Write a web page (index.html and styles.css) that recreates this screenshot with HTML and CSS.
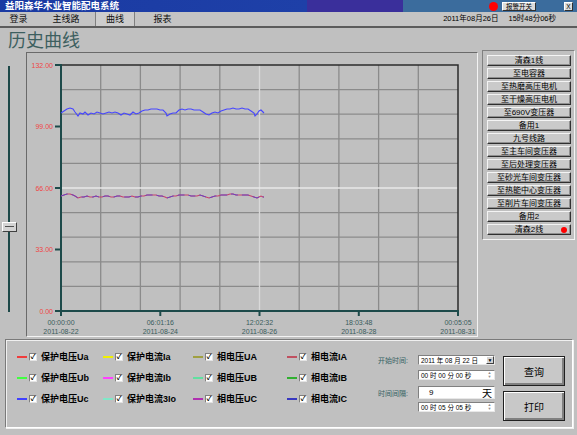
FILE: index.html
```html
<!DOCTYPE html>
<html lang="zh-CN">
<head>
    <meta charset="UTF-8">
    <title>历史曲线</title>
    <link rel="stylesheet" href="styles.css">
</head>
<body>
    <div class="titlebar">
        <span class="app-name">益阳森华木业智能配电系统</span>
        <span class="alarm-dot"></span>
        <span class="alarm-btn">报警开关</span>
        <span class="close-btn">X</span>
    </div>
    <div class="menubar">
        <span class="tab tab-login">登录</span>
        <span class="tab tab-main">主线路</span>
        <span class="tab tab-curve">曲线</span>
        <span class="tab tab-report">报表</span>
        <span class="clock">2011年08月26日<span class="clock-time">15时48分06秒</span></span>
    </div>

    <div class="workspace">
        <div class="left-col">
            <div class="page-title">历史曲线</div>
            <div class="chart-row">
                <div class="slider">
                    <div class="slider-track"></div>
                    <div class="slider-thumb"></div>
                </div>
                <div class="chart-box">
                    <svg class="chart" width="450" height="283" viewBox="27 53 450 283">
                        <!-- grid -->
                        <g stroke="#8b8b8b" stroke-width="1.3">
                            <line x1="100.7" y1="65" x2="100.7" y2="311"/>
                            <line x1="140.4" y1="65" x2="140.4" y2="311"/>
                            <line x1="180.1" y1="65" x2="180.1" y2="311"/>
                            <line x1="219.8" y1="65" x2="219.8" y2="311"/>
                            <line x1="299.2" y1="65" x2="299.2" y2="311"/>
                            <line x1="338.9" y1="65" x2="338.9" y2="311"/>
                            <line x1="378.6" y1="65" x2="378.6" y2="311"/>
                            <line x1="418.3" y1="65" x2="418.3" y2="311"/>
                            <line x1="61" y1="89.6" x2="458" y2="89.6"/>
                            <line x1="61" y1="114.2" x2="458" y2="114.2"/>
                            <line x1="61" y1="138.8" x2="458" y2="138.8"/>
                            <line x1="61" y1="163.4" x2="458" y2="163.4"/>
                            <line x1="61" y1="212.6" x2="458" y2="212.6"/>
                            <line x1="61" y1="237.2" x2="458" y2="237.2"/>
                            <line x1="61" y1="261.8" x2="458" y2="261.8"/>
                            <line x1="61" y1="286.4" x2="458" y2="286.4"/>
                        </g>
                        <line x1="259.5" y1="65" x2="259.5" y2="311" stroke="#d9d9d9" stroke-width="1.3"/>
                        <line x1="61" y1="188" x2="458" y2="188" stroke="#e9e9e9" stroke-width="1.3"/>

                        <!-- frame and axes -->
                        <polyline points="61,65 458,65 458,311" fill="none" stroke="#2b2b2b" stroke-width="1.5"/>
                        <g stroke="#1d4a4a" stroke-width="2">
                            <line x1="61" y1="64" x2="61" y2="312"/>
                            <line x1="60" y1="311" x2="459" y2="311"/>
                            <line x1="55" y1="65" x2="61" y2="65"/>
                            <line x1="55" y1="126.5" x2="61" y2="126.5"/>
                            <line x1="55" y1="188" x2="61" y2="188"/>
                            <line x1="55" y1="249.5" x2="61" y2="249.5"/>
                            <line x1="55" y1="311" x2="61" y2="311"/>
                            <line x1="61" y1="311" x2="61" y2="316"/>
                            <line x1="160.3" y1="311" x2="160.3" y2="316"/>
                            <line x1="259.5" y1="311" x2="259.5" y2="316"/>
                            <line x1="358.8" y1="311" x2="358.8" y2="316"/>
                            <line x1="458" y1="311" x2="458" y2="316"/>
                        </g>

                        <g class="y-labels" text-anchor="end">
                            <text x="53" y="67.5">132.00</text>
                            <text x="53" y="129">99.00</text>
                            <text x="53" y="190.5">66.00</text>
                            <text x="53" y="252">33.00</text>
                            <text x="53" y="313.5">0.00</text>
                        </g>
                        <g class="x-labels" text-anchor="middle">
                            <text x="61" y="325">00:00:00</text>
                            <text x="61" y="333.5">2011-08-22</text>
                            <text x="160.3" y="325">06:01:16</text>
                            <text x="160.3" y="333.5">2011-08-24</text>
                            <text x="259.5" y="325">12:02:32</text>
                            <text x="259.5" y="333.5">2011-08-26</text>
                            <text x="358.8" y="325">18:03:48</text>
                            <text x="358.8" y="333.5">2011-08-28</text>
                            <text x="458" y="325">00:05:05</text>
                            <text x="458" y="333.5">2011-08-31</text>
                        </g>

                        <!-- data -->
                        <polyline fill="none" stroke="#4646ff" stroke-width="1.1" points="61,113 64,111 67,109 70,108 73,109 75,112 78,116 80,113 83,114 85,112 88,115 91,113 94,114 97,112 100,113 103,114 106,113 109,112 112,113 115,112 118,113 121,115 124,113 127,114 130,115 133,112 136,114 139,113 142,111 145,110 148,110 151,109 154,109 157,109 160,110 163,110 166,113 167,116 170,114 173,113 176,113 179,110 182,109 185,110 188,109 191,109 194,110 197,110 200,110 203,112 206,114 209,115 212,113 215,112 218,113 221,111 224,110 227,109 230,109 233,108 236,109 239,109 242,108 245,109 248,109 251,111 254,113 255,116 257,114 259,111 261,110 263,112 264,113"/>
                        <polyline fill="none" stroke="#c8406a" stroke-width="1.1" points="61,196 64,195 67,194 70,194 73,195 75,196 78,198 81,197 84,197 87,196 90,197 93,197 96,196 99,197 102,197 105,196 108,196 111,197 114,197 117,196 120,196 123,197 126,197 129,197 132,196 135,197 138,197 141,196 144,196 147,195 150,195 153,195 156,195 159,196 162,196 165,197 167,198 170,197 173,196 176,196 179,195 182,195 185,195 188,195 191,196 194,196 197,196 200,195 203,196 206,197 209,198 212,197 215,196 218,196 221,195 224,195 227,195 230,194 233,194 236,195 239,195 242,195 245,195 248,195 251,196 254,197 257,198 259,197 261,196 263,197 264,197"/>
                        <polyline fill="none" stroke="#6a44c0" stroke-width="1" stroke-dasharray="7 4" points="61,196 64,195 67,194 70,194 73,195 75,196 78,198 81,197 84,197 87,196 90,197 93,197 96,196 99,197 102,197 105,196 108,196 111,197 114,197 117,196 120,196 123,197 126,197 129,197 132,196 135,197 138,197 141,196 144,196 147,195 150,195 153,195 156,195 159,196 162,196 165,197 167,198 170,197 173,196 176,196 179,195 182,195 185,195 188,195 191,196 194,196 197,196 200,195 203,196 206,197 209,198 212,197 215,196 218,196 221,195 224,195 227,195 230,194 233,194 236,195 239,195 242,195 245,195 248,195 251,196 254,197 257,198 259,197 261,196 263,197 264,197"/>
                    </svg>
                </div>
            </div>
        </div>

        <div class="channel-panel">
            <div class="channel">清森1线</div>
            <div class="channel">至电容器</div>
            <div class="channel">至热磨高压电机</div>
            <div class="channel">至干燥高压电机</div>
            <div class="channel">至690V变压器</div>
            <div class="channel">备用1</div>
            <div class="channel">九号线路</div>
            <div class="channel">至主车间变压器</div>
            <div class="channel">至后处理变压器</div>
            <div class="channel">至砂光车间变压器</div>
            <div class="channel">至热能中心变压器</div>
            <div class="channel">至削片车间变压器</div>
            <div class="channel">备用2</div>
            <div class="channel">清森2线<span class="live-dot"></span></div>
        </div>
    </div>

    <div class="bottom-panel">
        <div class="legend">
            <div class="legend-item"><span class="swatch" style="background:#f03c3c"></span><span class="check">✓</span><span class="legend-label">保护电压Ua</span></div>
            <div class="legend-item"><span class="swatch" style="background:#f0f000"></span><span class="check">✓</span><span class="legend-label">保护电流Ia</span></div>
            <div class="legend-item"><span class="swatch" style="background:#a0a040"></span><span class="check">✓</span><span class="legend-label">相电压UA</span></div>
            <div class="legend-item"><span class="swatch" style="background:#c05060"></span><span class="check">✓</span><span class="legend-label">相电流IA</span></div>

            <div class="legend-item"><span class="swatch" style="background:#40ff40"></span><span class="check">✓</span><span class="legend-label">保护电压Ub</span></div>
            <div class="legend-item"><span class="swatch" style="background:#ff40ff"></span><span class="check">✓</span><span class="legend-label">保护电流Ib</span></div>
            <div class="legend-item"><span class="swatch" style="background:#60e0a0"></span><span class="check">✓</span><span class="legend-label">相电压UB</span></div>
            <div class="legend-item"><span class="swatch" style="background:#30b030"></span><span class="check">✓</span><span class="legend-label">相电流IB</span></div>

            <div class="legend-item"><span class="swatch" style="background:#4040ff"></span><span class="check">✓</span><span class="legend-label">保护电压Uc</span></div>
            <div class="legend-item"><span class="swatch" style="background:#80e8c8"></span><span class="check">✓</span><span class="legend-label">保护电流3Io</span></div>
            <div class="legend-item"><span class="swatch" style="background:#b030b0"></span><span class="check">✓</span><span class="legend-label">相电压UC</span></div>
            <div class="legend-item"><span class="swatch" style="background:#3838c0"></span><span class="check">✓</span><span class="legend-label">相电流IC</span></div>
        </div>

        <div class="controls">
            <div class="fields">
                <div class="field-row">
                    <span class="field-label">开始时间:</span>
                    <span class="field">2011 年 08 月 22 日<span class="drop">▼</span></span>
                </div>
                <div class="field-row row-2">
                    <span class="field indent">00 时 00 分 00 秒<span class="spin"><i>▲</i><i>▼</i></span></span>
                </div>
                <div class="field-row row-3">
                    <span class="field-label">时间间隔:</span>
                    <span class="field field-tall"><span class="days">9</span><span class="unit">天</span></span>
                </div>
                <div class="field-row row-4">
                    <span class="field indent">00 时 05 分 05 秒<span class="spin"><i>▲</i><i>▼</i></span></span>
                </div>
            </div>
            <div class="actions">
                <div class="action-btn">查询</div>
                <div class="action-btn">打印</div>
            </div>
        </div>
    </div>
</body>
</html>
```

FILE: styles.css
```css
* {
    box-sizing: border-box;
}
body {
    margin: 0;
    width: 577px;
    height: 435px;
    overflow: hidden;
    background: #c0c0c0;
    font-family: "Liberation Sans", "Noto Sans CJK SC", sans-serif;
    color: #000;
}

/* title bar */
.titlebar {
    height: 12px;
    display: flex;
    align-items: center;
    background: linear-gradient(to right, #1a3aa2 0, #1e40a8 307px, #3a2f9b 307px, #3a2f9b 403px, #3b6c9d 403px);
}
.app-name {
    color: #fff;
    font-weight: bold;
    font-size: 9.5px;
    line-height: 12px;
    padding-left: 5px;
}
.alarm-dot {
    margin-left: auto;
    width: 9px;
    height: 9px;
    border-radius: 50%;
    background: #ff0000;
}
.alarm-btn {
    margin-left: 4px;
    width: 34px;
    height: 9px;
    background: #dcdcdc;
    border: 1px solid;
    border-color: #fff #303030 #303030 #fff;
    font-size: 6.5px;
    line-height: 7px;
    text-align: center;
}
.close-btn {
    margin-left: 28px;
    margin-right: 4px;
    width: 9px;
    height: 9px;
    background: #dcdcdc;
    border: 1px solid;
    border-color: #fff #303030 #303030 #fff;
    font-size: 6.5px;
    line-height: 7px;
    text-align: center;
}

/* menu */
.menubar {
    height: 16px;
    display: flex;
    background: #c4c4c4;
    border-bottom: 2px solid #5c5c5c;
}
.tab {
    font-size: 9px;
    line-height: 14px;
    text-align: center;
    color: #111;
}
.tab-login { width: 37px; }
.tab-main { width: 58px; }
.tab-curve {
    width: 40px;
    background: #cdcdcd;
    border-left: 1px solid #808080;
    border-right: 1px solid #808080;
}
.tab-report { width: 55px; }
.clock {
    margin-left: auto;
    padding-right: 21px;
    font-size: 7.5px;
    line-height: 14px;
}
.clock-time {
    margin-left: 10px;
}

/* middle */
.workspace {
    display: flex;
    height: 311px;
}
.left-col {
    width: 478px;
}
.page-title {
    height: 24px;
    padding-left: 8px;
    font-family: "Noto Sans CJK SC", sans-serif;
    font-size: 18px;
    line-height: 22px;
    color: #3d5f5f;
}
.chart-row {
    display: flex;
    height: 287px;
}
.slider {
    position: relative;
    width: 26px;
}
.slider-track {
    margin-left: 8px;
    margin-top: 14px;
    width: 2px;
    height: 246px;
    background: #1d4848;
}
.slider-thumb {
    position: absolute;
    left: 2px;
    top: 170px;
    width: 15px;
    height: 10px;
    background: #d4d4d4;
    border: 1px solid;
    border-color: #fff #404040 #404040 #fff;
}
.slider-thumb::after {
    content: "";
    display: block;
    margin: 3px 2px 0;
    height: 1px;
    background: #505050;
}
.chart-box {
    width: 452px;
    height: 285px;
    border: 1px solid;
    border-color: #6a6a6a #f2f2f2 #f2f2f2 #6a6a6a;
}
.chart {
    display: block;
}
.y-labels text {
    font-family: "Liberation Sans", sans-serif;
    font-size: 7px;
    fill: #f04646;
}
.x-labels text {
    font-family: "Liberation Sans", sans-serif;
    font-size: 7px;
    fill: #3a5c5c;
}

/* channel list */
.channel-panel {
    margin-top: 22px;
    margin-left: 4px;
    width: 93px;
    height: 190px;
    border: 1px solid;
    border-color: #808080 #f4f4f4 #f4f4f4 #808080;
    padding: 4px 0 0 4px;
    display: flex;
    flex-direction: column;
    gap: 2px;
}
.channel {
    position: relative;
    width: 84px;
    height: 11px;
    background: #cacaca;
    border: 1px solid;
    border-color: #f4f4f4 #303030 #303030 #f4f4f4;
    box-shadow: inset -1px -1px #909090;
    font-size: 8px;
    line-height: 9px;
    text-align: center;
}
.live-dot {
    position: absolute;
    right: 3px;
    top: 2px;
    width: 6px;
    height: 6px;
    border-radius: 50%;
    background: #f00;
}

/* bottom */
.bottom-panel {
    margin-left: 5px;
    width: 568px;
    height: 89px;
    border: 1px solid;
    border-color: #7a7a7a #fff #fff #7a7a7a;
    box-shadow: inset 1px 1px #f0f0f0, 1px 1px #f0f0f0;
    display: flex;
}
.legend {
    padding: 6px 0 0 11px;
    display: grid;
    grid-template-columns: 86px 90px 94px 90px;
    grid-auto-rows: 21px;
    align-items: center;
}
.legend-item {
    display: flex;
    align-items: center;
}
.swatch {
    width: 10px;
    height: 2px;
    margin-right: 2px;
}
.check {
    width: 8px;
    height: 8px;
    margin-right: 4px;
    background: #fff;
    border: 1px solid;
    border-color: #808080 #e4e4e4 #e4e4e4 #808080;
    font-size: 7px;
    line-height: 6px;
    text-align: center;
    font-weight: bold;
}
.legend-label {
    font-size: 9px;
    font-weight: bold;
}

.controls {
    margin-left: 1px;
    padding-top: 15px;
    display: flex;
}
.fields {
    width: 118px;
}
.field-row {
    display: flex;
    align-items: center;
}
.row-2 { margin-top: 5px; }
.row-3 { margin-top: 6px; }
.row-4 { margin-top: 3px; }
.field-label {
    width: 40px;
    font-size: 7px;
    color: #356262;
}
.field {
    width: 77px;
    height: 10px;
    display: flex;
    align-items: center;
    padding-left: 2px;
    background: #fff;
    border: 1px solid;
    border-color: #808080 #e8e8e8 #e8e8e8 #808080;
    font-size: 6.5px;
    white-space: pre;
}
.indent {
    margin-left: 40px;
}
.field-tall {
    height: 13px;
}
.days {
    padding-left: 8px;
    font-size: 8px;
}
.unit {
    margin-left: auto;
    margin-right: 2px;
    font-size: 10px;
}
.drop {
    margin-left: auto;
    width: 8px;
    height: 8px;
    background: #d4d4d4;
    border: 1px solid;
    border-color: #fff #404040 #404040 #fff;
    font-size: 5px;
    line-height: 6px;
    text-align: center;
}
.spin {
    margin-left: auto;
    margin-right: 1px;
    width: 7px;
    display: flex;
    flex-direction: column;
    font-size: 4px;
    line-height: 4px;
    color: #909090;
    text-align: center;
}
.spin i {
    font-style: normal;
}
.actions {
    margin-left: 7px;
    padding-top: 1px;
    display: flex;
    flex-direction: column;
    gap: 5px;
}
.action-btn {
    width: 62px;
    height: 30px;
    display: flex;
    align-items: center;
    justify-content: center;
    background: #c8c8c8;
    border: 1px solid #202020;
    box-shadow: inset 1px 1px #fff, inset -2px -2px #808080;
    font-size: 10px;
}
```
